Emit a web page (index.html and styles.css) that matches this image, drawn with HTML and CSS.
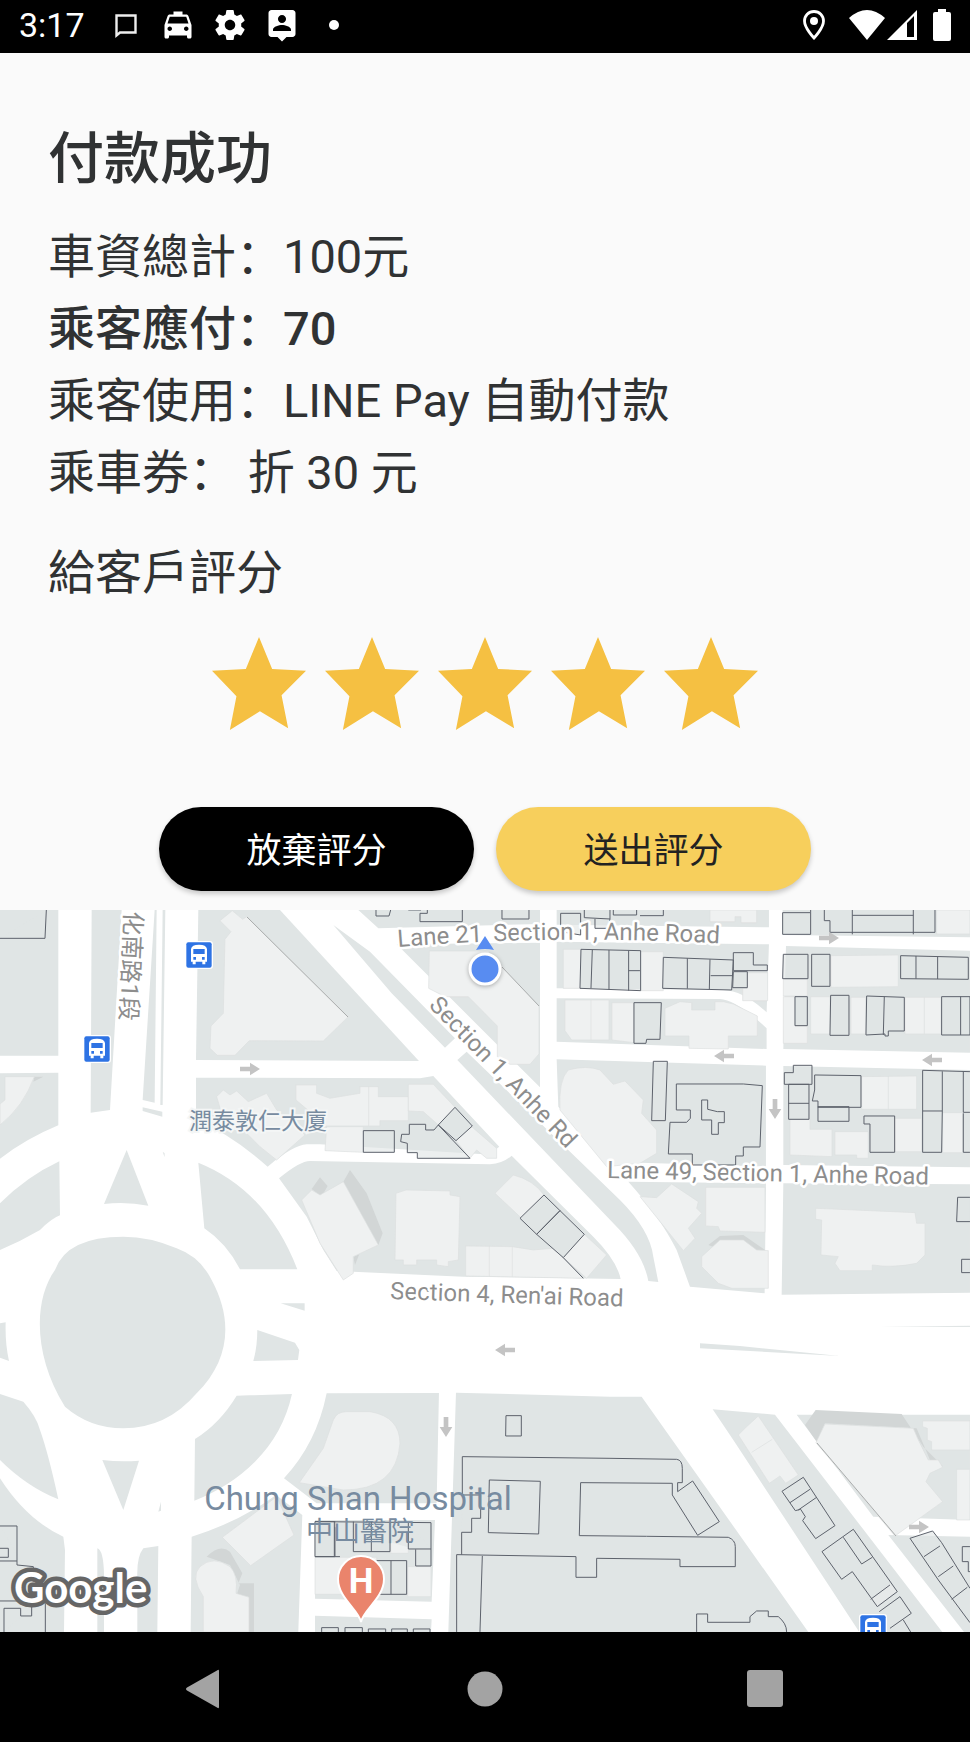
FILE: index.html
```html
<!DOCTYPE html>
<html lang="zh">
<head>
    <meta charset="UTF-8">
    <meta name="viewport" content="width=device-width, initial-scale=1.0">
    <title>付款成功</title>
    <link rel="stylesheet" href="styles.css">
</head>
<body>
    <header class="status-bar">
        <span class="clock">3:17</span>
        <div class="notifications">
            <svg viewBox="0 0 36 36"><path d="M8.500 8.500H27.500V25.500H12L8.500 28.500z" fill="none" stroke="#eee" stroke-width="2.400"/></svg>
            <svg viewBox="0 0 24 24"><path d="M18.920 6.010C18.720 5.420 18.160 5 17.500 5H15V3H9v2H6.500c-.66 0-1.210.42-1.420 1.010L3 12v8c0 .55.45 1 1 1h1c.55 0 1-.45 1-1v-1h12v1c0 .55.45 1 1 1h1c.55 0 1-.45 1-1v-8l-2.080-5.990zM6.500 16c-.83 0-1.500-.67-1.500-1.500S5.670 13 6.500 13s1.500.67 1.500 1.500S7.330 16 6.500 16zm11 0c-.83 0-1.500-.67-1.500-1.500s.67-1.500 1.500-1.500 1.500.67 1.500 1.500-.67 1.500-1.500 1.500zM5 11l1.500-4.500h11L19 11H5z"/></svg>
            <svg viewBox="0 0 24 24"><path d="M19.430 12.980c.04-.32.07-.64.07-.98s-.03-.66-.07-.98l2.110-1.650c.19-.15.24-.42.12-.64l-2-3.460c-.12-.22-.39-.3-.61-.22l-2.490 1c-.52-.4-1.080-.73-1.690-.98l-.38-2.650C14.460 2.180 14.250 2 14 2h-4c-.25 0-.46.18-.49.42l-.38 2.650c-.61.25-1.170.59-1.690.98l-2.490-1c-.23-.09-.49 0-.61.22l-2 3.460c-.13.22-.07.49.12.64l2.110 1.650c-.04.32-.07.65-.07.98s.03.66.07.98l-2.110 1.650c-.19.15-.24.42-.12.64l2 3.460c.12.22.39.3.61.22l2.490-1c.52.4 1.080.73 1.690.98l.38 2.650c.03.24.24.42.49.42h4c.25 0 .46-.18.49-.42l.38-2.650c.61-.25 1.170-.59 1.690-.98l2.490 1c.23.09.49 0 .61-.22l2-3.460c.12-.22.07-.49-.12-.64l-2.110-1.650zM12 15.500c-1.930 0-3.500-1.570-3.500-3.500s1.570-3.500 3.500-3.500 3.500 1.570 3.500 3.500-1.570 3.500-3.500 3.500z"/></svg>
            <svg viewBox="0 0 24 24"><path d="M19 2H5c-1.110 0-2 .9-2 2v14c0 1.100.89 2 2 2h4l3 3 3-3h4c1.100 0 2-.9 2-2V4c0-1.100-.9-2-2-2zm-7 3.300c1.490 0 2.700 1.210 2.700 2.700s-1.210 2.700-2.700 2.700S9.300 9.490 9.300 8s1.210-2.700 2.700-2.700zM18 16H6v-.9c0-2 4-3.100 6-3.100s6 1.100 6 3.100v.9z"/></svg>
            <svg viewBox="0 0 36 36"><circle cx="18" cy="18" r="5"/></svg>
        </div>
        <div class="system-icons">
            <svg class="pin" viewBox="0 0 22 30"><path d="M11 1.500C5.500 1.500 1.500 5.700 1.500 11C1.500 18 11 28 11 28S20.500 18 20.500 11C20.500 5.700 16.500 1.500 11 1.500z" fill="none" stroke="#fff" stroke-width="2.800"/><circle cx="11" cy="11" r="4"/></svg>
            <svg class="wifi" viewBox="0 0 36 30"><path d="M0 8Q18 -8 36 8L18 30z"/></svg>
            <svg class="signal" viewBox="0 0 30 30"><path d="M0 30L30 0V30zM20 13V27H27V6z" fill-rule="evenodd"/></svg>
            <svg class="battery" viewBox="0 0 18 32"><path d="M5 0H13V3H16Q18 3 18 5V30Q18 32 16 32H2Q0 32 0 30V5Q0 3 2 3H5z"/></svg>
        </div>
    </header>

    <main class="payment">
        <h1>付款成功</h1>
        <ul class="receipt">
            <li>車資總計：100元</li>
            <li class="due">乘客應付：70</li>
            <li>乘客使用：LINE Pay 自動付款</li>
            <li>乘車券： 折 30 元</li>
        </ul>
        <form class="rating">
            <h2 id="ratingLabel">給客戶評分</h2>
            <div class="stars" role="radiogroup" aria-labelledby="ratingLabel">
                <input type="radio" name="rating" value="1" aria-label="1">
                <input type="radio" name="rating" value="2" aria-label="2">
                <input type="radio" name="rating" value="3" aria-label="3">
                <input type="radio" name="rating" value="4" aria-label="4">
                <input type="radio" name="rating" value="5" aria-label="5" checked>
            </div>
            <div class="actions">
                <button type="button" class="skip">放棄評分</button>
                <button type="submit" class="send">送出評分</button>
            </div>
        </form>
    </main>

    <section class="map">
        <svg viewBox="0 0 970 722" preserveAspectRatio="xMidYMid slice">
            <defs>
                <path id="arrow" d="M-30 -7H0V-19L30 0L0 19V7H-30z"/>
                <g id="bus">
                    <rect x="-42" y="-42" width="84" height="84" rx="10" fill="#fff"/>
                    <rect x="-38" y="-38" width="76" height="76" rx="6" fill="#2e73e4"/>
                    <path d="M-24 20V-18Q-22 -31 0 -31Q22 -31 24 -18V20H19V28H10V20H-10V28H-19V20z" fill="#fff"/>
                    <path d="M-17 -18H17V-3H-17zM-17 6h8v8h-8zM9 6h8v8h-8z" fill="#2e73e4"/>
                </g>
                <path id="lane21" d="M398 37Q560 24 730 34"/>
                <path id="anheRd" d="M428 96L580 253"/>
                <path id="lane49" d="M607 268L950 275"/>
                <path id="renai" d="M390 389L640 397"/>
                <path id="dunhua" d="M125 1L119 130"/>
            </defs>

            <!-- city blocks -->
            <g class="block">
                <g transform="translate(0 -10) scale(.3333)">
                    <path d="M0 30H175V467H0zM275 30H365L330 630L272 638zM464 30H470L464 608L428 600zM488 30H496L488 615H481zM428 622L487 635V650L428 633z"/>
                    <path d="M595 30H840L1257 483L588 480z"/>
                    <path d="M0 520L175 518V676Q80 715 0 776zM588 533L1260 535L1300 528L1498 740Q1470 764 1440 762L960 733H920Q880 735 803 800Q690 700 588 660z"/>
                    <path d="M380 750L312 912Q380 905 445 917z"/>
                    <path d="M0 910Q80 830 178 784L180 946Q155 955 120 990Q60 1025 0 1050z"/>
                    <path d="M595 788Q800 870 892 1108H720Q680 1030 613 985z"/>
                    <path d="M488 755L494 760V772z"/>
                </g>
                <g transform="translate(320 -10) scale(.3333)">
                    <path d="M-123 835Q-60 783 -30 783L510 793Q550 790 575 767L820 1010Q890 1080 902 1137L430 1130L50 1113L10 1050L-40 950z"/>
                    <path d="M40 75L150 155L405 415L375 443L215 280zM412 480L440 455L900 900Q990 990 1000 1070L1015 1146L985 1143Q970 1060 880 970z"/>
                    <path d="M115 30H660V72L175 85zM230 133L660 128V562z"/>
                    <path d="M710 30H1347V82L710 74zM710 125L1347 133L1340 337Q1270 272 1210 270L710 265z"/>
                    <path d="M710 295L1200 297Q1250 300 1340 385V447L710 425zM710 478L1338 497V800L860 785L715 620z"/>
                    <path d="M925 845L1338 850L1334 1180L1110 1160L1070 1050Q1020 950 925 845z"/>
                </g>
                <g transform="translate(640 -10) scale(.3333)">
                    <path d="M428 30H990V112L428 105zM438 138L990 152V458L430 447zM430 498L990 510V802L430 795zM430 850L990 853V1178L425 1184z"/>
                </g>
                <g transform="translate(0 350) scale(.3333)">
                    <path d="M370 -70Q200 -70 165 30C100 120 100 290 195 440Q270 505 370 505Q500 505 590 400C690 300 700 180 635 60Q600 -10 530 -35Q450 -70 370 -70z"/>
                    <path d="M0 190L17 187Q15 250 27 303L0 293zM842 130H914V152zM772 210L885 248L898 270L894 300L760 303Q772 260 772 210z"/>
                    <path d="M710 407L876 402Q850 520 765 605Q690 680 583 722L585 537Q660 490 710 407z"/>
                    <path d="M0 402L70 425Q110 470 120 510Q145 580 175 718Q80 680 0 600zM307 600Q360 606 417 602L370 750zM475 755L483 725V752z"/>
                    <path d="M0 655Q80 780 190 830L195 870L192 1116H0zM292 865Q310 870 312 940V1116H292zM475 858L430 865Q410 890 412 950V1116H472z"/>
                    <path d="M575 830Q720 785 828 705L907 765L895 1116H572zM852 655Q950 550 980 400L1317 399L1310 730H950z"/>
                </g>
                <g transform="translate(320 350) scale(.3333)">
                    <path d="M-15 780H345L335 1025L-15 1016zM-15 1067L335 1078L333 1116H-15zM408 398L870 410H965L1465 1116H385z"/>
                </g>
                <g transform="translate(640 350) scale(.3333)">
                    <path d="M218 448L405 464L907 1116H658L280 540zM470 464H990V780L700 770zM745 825L990 830V1116H972zM180 250L300 258L600 288L180 265zM720 200L990 197V201z"/>
                </g>
            </g>

            <!-- shadows of tall buildings -->
            <g class="shadow">
                <path transform="translate(0 -10) scale(.3333)" d="M103 530H130L100 545zM960 832L983 858L965 890L935 867z"/>
                <path transform="translate(320 -10) scale(.3333)" d="M90 810L70 845L175 1035L188 1000L140 880zM100 1070L118 1062L105 1095z"/>
                <path transform="translate(640 -10) scale(.3333)" d="M205 1035L240 1008L310 1005L375 1050H340L310 1020H260L230 1045z"/>
                <path transform="translate(0 350) scale(.3333)" d="M620 890Q660 850 690 875L727 940L715 970H762V1116H745V1010L710 1005L720 975L690 915z"/>
                <path transform="translate(640 350) scale(.3333)" d="M527 450L785 462L850 560L910 620L870 600L830 505L555 490L530 545L495 495z"/>
            </g>

            <!-- flat buildings -->
            <g class="building">
                <g transform="translate(0 -10) scale(.3333)">
                    <path d="M697 32L660 62L693 95L675 118L670 340L633 378L630 445L652 466H705L748 422L970 423L1045 350L740 50L728 58z"/>
                    <path d="M15 530H103Q70 620 0 675V612L15 600zM670 570L650 590L665 640L740 700L780 740L830 780L915 705L830 630L800 580L745 605L710 573L690 585z"/>
                    <path d="M888 555H950V580L990 595L1080 580V560H1135V590H1225V662H1140V678H980L888 600z"/>
                </g>
                <g transform="translate(320 -10) scale(.3333)">
                    <path d="M20 680H130V757L15 752zM265 553H340L405 622L355 675L310 635L265 633zM455 680L530 745V775H500L470 750L450 775L408 722zM146 560V678"/>
                    <path d="M328 153H505L657 318V462L630 493H570L532 470V378L445 290H375L326 265z"/>
                    <path d="M745 510Q800 495 840 510L880 553L915 543L970 600L965 640L1010 690V760L960 790L860 800L720 630Q715 540 745 510z"/>
                    <path d="M70 845L175 1035L100 1070V1120L70 1140L0 1030L-55 900L-25 870L0 885z"/>
                    <path d="M228 880L258 870L390 873V885L420 890L415 1080L385 1085V1100L350 1095V1080H290V1095H250V1080H225z"/>
                    <path d="M437 1038L577 1040L640 1050L700 1045L790 1135L437 1128zM508 1038V1130M577 1040V1130M580 825Q640 840 672 885L605 955L525 880zM793 1003L860 1065L800 1135L730 1073z"/>
                    <path d="M730 148H783V265H730zM735 300H867V420H755L735 392zM813 300V420M876 308H942V428L876 420zM962 155H1030V272H962z"/>
                </g>
                <g transform="translate(640 -10) scale(.3333)">
                    <path d="M210 30H350V68H303V50H285V65H210zM890 30H990V102H890zM573 167L775 165V260L573 262z"/>
                    <path d="M75 325L120 305L155 308V330H225V305H250L280 312L352 348V408H265V447L147 445V408H75zM322 218H383V302H308V265H322z"/>
                    <path d="M430 238H502V288H430zM430 290H465V378H502V430H430zM512 290H570V402H512zM633 292H677V402H633zM795 292H903V402H795zM853 292V402"/>
                    <path d="M665 530L830 528V628H665zM745 528V628M450 658H510V688H576V770L450 765zM585 695H685V775H650V765H585zM765 655H845V755H765zM908 638H968V758H908z"/>
                    <path d="M0 890L50 893L95 852L175 905L170 925L185 940L145 985L165 1015L130 1052zM197 862H375V997L240 993L235 980L197 978z"/>
                    <path d="M185 1070L240 1020H310L350 1050L385 1052V1165H275L235 1150L185 1100zM527 925L825 938L830 970H855V1065L830 1090Q760 1105 697 1095V1112H600L585 1090L595 1070L543 1065L545 960L527 958z"/>
                </g>
                <g transform="translate(0 350) scale(.3333)">
                    <path d="M667 832L830 710L882 825L752 917zM610 1010Q570 950 600 920Q640 885 690 920Q715 945 708 1000L747 1012V1116H610z"/>
                    <path d="M898 668L970 565L1000 480Q1010 455 1040 455H1110Q1200 470 1200 550Q1190 690 1030 690z"/>
                </g>
                <g transform="translate(320 350) scale(.3333)">
                    <path d="M-15 892H170V1003H-15zM263 920H333V1010H263zM212 840H265V880H212z"/>
                </g>
                <g transform="translate(640 350) scale(.3333)">
                    <path d="M295 525L320 500L355 468L475 645L437 670L420 648L388 670zM335 577L397 538M555 492L820 505L835 540L850 570L865 600H895L908 622L870 640L858 665L908 725L765 828L528 548z"/>
                    <path d="M848 483H990V570H875V545L862 540V505L848 500zM950 628H990V780H950zM692 1018L750 968L772 995L712 1040z"/>
                </g>
            </g>

            <!-- outlined buildings -->
            <g class="outline">
                <path transform="translate(0 -10) scale(.3333)" d="M0 115H135L139 30"/>
                <g transform="translate(320 -10) scale(.3333)">
                    <path d="M168 30V48H207L212 30M265 30H303M322 30V40H300V65H427V30M546 30V57H627V30M722 40H782V105L722 95zM793 30V53L870 57V30M880 30V45H950V30M825 57V85H865L870 57"/>
                    <path d="M783 148L962 152V272L780 265zM817 150L813 265M867 150V270M926 152V272M926 212H960M942 308H1024L1020 418H980L978 430H942z"/>
                    <path d="M130 692H223V757H130zM245 703H268V673H317V690H342L355 675L450 775H292V758H262V730L242 725zM405 622L457 678L408 722L355 675z"/>
                    <path d="M672 885L720 932L650 1003L600 955zM720 932L793 1003L730 1073L650 1003zM730 1073L790 1135"/>
                </g>
                <g transform="translate(640 -10) scale(.3333)">
                    <path d="M0 47H70V30M428 38H512V103H428zM512 30V38M553 30V62H570V97H885V30M637 30V103M637 46H820M820 30V103"/>
                    <path d="M70 172L280 180L275 270L68 265zM142 175V266M210 178L208 268M212 227H278M280 158H340V195H382V212H280zM280 215H322V263H278z"/>
                    <path d="M430 163H504V236H428zM515 163H570V259H515zM782 167L985 172V238L782 236zM828 168V236M893 170V237M465 290H502V377H465zM572 286H627V406H570zM680 288L793 292V393H745V408H735V402L678 405zM733 290L730 405M905 290H990V405H905zM962 290V405"/>
                    <path d="M40 484H82L76 662H35zM109 552H310L367 557L360 741H310V768H287V795H157V762H85L90 667H140L151 655V630H109zM185 600H203V628L232 635H253V668H235V703H215V660H185z"/>
                    <path d="M433 518H460V496H516V553H433zM446 553H507V658H446zM446 610H507M524 525L663 527V622H534V603H517L524 570zM534 620H627V664H534zM672 648H764V757H690V672H672zM848 511L990 515M848 511V633H907V514M848 633V757H905L907 633M970 515V637H990M970 640V757H990"/>
                    <path d="M990 892H953L950 965H990M990 1078H965V1118H990"/>
                </g>
                <path transform="translate(0 350) scale(.3333)" d="M0 798H51V915L100 920V965M0 865H25V892H0M0 903H51M0 1023H90M12 1116V1045H62V1068H95V1040M136 1116V1030M945 785V890H1005V785z"/>
                <g transform="translate(320 350) scale(.3333)">
                    <path d="M558 467H604V528H557zM427 705V590L870 595L1070 598Q1087 600 1087 625V668H1073V695L1118 663L1198 785L1133 826L1057 705V670L782 668L778 827L980 829L1225 832Q1246 840 1246 860V920H1080V898L830 895V952H768V890L410 884V1116M425 884V817H455V775H482V705H427M508 660L661 664L656 822L505 818zM487 888L480 1116M1130 1116V1062H1163V1087H1290V1070L1310 1053H1345V1070H1375Q1400 1090 1400 1116"/>
                    <path d="M-15 785L333 788V918H287V868M43 785V888M100 785V875H210V788M154 785V875M265 788V867H333M-15 890H60M170 902H260V1003H170M213 902V1003M5 1116V1103H55V1116M75 1116V1103H127V1116M145 1116V1107H197V1116M215 1116V1107H262V1116M280 1116V1107H330V1116"/>
                </g>
                <g transform="translate(640 350) scale(.3333)">
                    <path d="M426 694L490 652L585 797L527 836L488 782L496 770L482 748L466 752zM450 728L510 688M475 750L530 712"/>
                    <path d="M546 875L640 808L772 995L712 1040L637 935L605 958zM610 832L665 912L697 892M692 1018L750 975M718 1055L780 1010L814 1060L750 1105M790 1080L812 1116"/>
                    <path d="M810 835L878 813L905 848L990 985M810 835L895 960L990 1088M852 890L900 858M895 950L940 918M935 1018L982 982M990 860H967V905H985V935H990"/>
                </g>
            </g>
            <g class="edge">
                <path d="M247 7L348 107M502 57L539 96M817 533L896 626"/>
            </g>

            <!-- one-way arrows -->
            <g class="arrows">
                <use href="#arrow" transform="translate(250 159) scale(.3333)"/>
                <use href="#arrow" transform="translate(829 28) scale(.3333)"/>
                <use href="#arrow" transform="translate(724 146) rotate(180) scale(.3333)"/>
                <use href="#arrow" transform="translate(932 150) rotate(180) scale(.3333)"/>
                <use href="#arrow" transform="translate(775 199) rotate(90) scale(.3333)"/>
                <use href="#arrow" transform="translate(505 440) rotate(180) scale(.3333)"/>
                <use href="#arrow" transform="translate(446 517) rotate(90) scale(.3333)"/>
                <use href="#arrow" transform="translate(919 617) scale(.3333)"/>
            </g>

            <use href="#bus" transform="translate(199 45) scale(.3333)"/>
            <use href="#bus" transform="translate(97 139) scale(.3333)"/>
            <use href="#bus" transform="translate(873 718) scale(.3333)"/>

            <g class="road-name">
                <text><textPath href="#lane21">Lane 21, Section 1, Anhe Road</textPath></text>
                <text><textPath href="#anheRd">Section 1, Anhe Rd</textPath></text>
                <text><textPath href="#lane49">Lane 49, Section 1, Anhe Road</textPath></text>
                <text><textPath href="#renai">Section 4, Ren'ai Road</textPath></text>
                <text><textPath href="#dunhua">化南路1段</textPath></text>
            </g>
            <g class="place-name">
                <text class="building-name" x="189" y="219">潤泰敦仁大廈</text>
                <text class="hospital" x="358" y="600">Chung Shan Hospital</text>
                <text class="hospital-local" x="360" y="631">中山醫院</text>
            </g>

            <!-- hospital marker -->
            <path d="M361 712C359 700 338 688 338 669A23 23 0 0 1 384 669C384 688 363 700 361 712z" fill="#ea846c" stroke="#fff" stroke-width="2"/>
            <text class="marker-letter" x="361" y="683">H</text>

            <!-- driver position -->
            <circle class="position" cx="485" cy="59" r="15"/>
            <path d="M485 26L476 40Q485 38 494 40z" fill="#588cf1"/>

            <text class="logo" x="14" y="693">Google</text>
        </svg>
    </section>

    <nav class="nav-bar">
        <button type="button" aria-label="Back"><svg viewBox="0 0 40 40"><path d="M34 2V38Q34 40 32 38.500L2 21.500Q0 20 2 18.500L32 1.500Q34 0 34 2z"/></svg></button>
        <button type="button" aria-label="Home"><svg viewBox="0 0 40 40"><circle cx="20" cy="20" r="17.500"/></svg></button>
        <button type="button" aria-label="Recent apps"><svg viewBox="0 0 40 40"><rect x="2" y="1" width="36" height="37" rx="3"/></svg></button>
    </nav>
</body>
</html>
```
FILE: styles.css
```css
:root {
    --page-bg: #fafafa;
    --text-color: #303233;
    --star-color: #f5c042;
    --send-color: #f7cf5c;
    --block-color: #e0e5e5;
    --building-color: #eff1f1;
    --cjk: Roboto, "Noto Sans CJK SC", sans-serif;
}

* {
    box-sizing: border-box;
}

body {
    margin: 0;
    min-height: 100vh;
    display: flex;
    flex-direction: column;
    font-family: var(--cjk);
    color: var(--text-color);
    background-color: var(--page-bg);
}

svg {
    display: block;
}

/* Status bar */
.status-bar {
    display: flex;
    align-items: center;
    height: 53px;
    padding: 0 19px 3px;
    background-color: #000;
    color: #fff;
    fill: #fff;
}

.clock {
    width: 89px;
    font-size: 34px;
    line-height: 50px;
}

.notifications {
    display: flex;
    gap: 16px;
}

.notifications svg {
    width: 36px;
    height: 36px;
}

.system-icons {
    display: flex;
    align-items: center;
    margin-left: auto;
}

.pin {
    width: 22px;
    height: 30px;
    margin-right: 24px;
}

.wifi {
    width: 36px;
    height: 30px;
    margin-right: 2px;
}

.signal {
    width: 30px;
    height: 30px;
    margin-right: 16px;
}

.battery {
    width: 18px;
    height: 32px;
}

/* Payment summary */
.payment {
    padding: 66px 48px 19px;
}

h1 {
    margin: 0;
    font-size: 56px;
    line-height: 80px;
    font-weight: 500;
}

.receipt {
    margin: 22px 0 28px;
    padding: 0;
    list-style: none;
    font-size: 47px;
    line-height: 72px;
}

.due {
    font-weight: 500;
}

h2 {
    margin: 0;
    font-size: 47px;
    line-height: 72px;
    font-weight: 400;
}

.stars {
    display: flex;
    justify-content: center;
    gap: 19px;
    margin: 28px 0 76px;
}

.stars input {
    appearance: none;
    width: 94px;
    height: 94px;
    margin: 0;
    background-color: var(--star-color);
    clip-path: polygon(50% 0, 64% 34%, 100% 36%, 74% 62%, 81% 97%, 51% 79%, 19% 99%, 26% 63%, 0 36%, 36% 34%);
    cursor: pointer;
}

.actions {
    display: flex;
    justify-content: center;
    gap: 22px;
}

.actions button {
    width: 315px;
    height: 84px;
    padding: 0 0 3px;
    border: none;
    border-radius: 42px;
    font-family: var(--cjk);
    font-size: 35px;
    box-shadow: 0 3px 5px rgba(0, 0, 0, 0.2);
    cursor: pointer;
}

.actions .skip {
    background-color: #000;
    color: #fff;
}

.actions .send {
    background-color: var(--send-color);
    color: #222;
}

/* Map */
.map {
    flex: 1;
    display: flex;
    background-color: #fff;
    overflow: hidden;
}

.map svg {
    width: 100%;
}

.block {
    fill: var(--block-color);
}

.shadow {
    fill: #d2d6d6;
}

.building {
    fill: var(--building-color);
    stroke: #dcdfdf;
    stroke-width: 2;
}

.outline {
    fill: var(--block-color);
    fill-opacity: 0.6;
    stroke: #5c616b;
    stroke-width: 3;
}

.edge {
    fill: none;
    stroke: #a9acac;
    stroke-width: 1;
}

.arrows {
    fill: #c4c4c4;
}

.road-name {
    font-size: 24px;
    fill: #8d8d8d;
    stroke: #fff;
    stroke-width: 5px;
    stroke-linejoin: round;
    paint-order: stroke;
}

.place-name {
    fill: #778ba0;
}

.building-name {
    font-size: 23px;
    stroke: #f4f6f6;
    stroke-width: 4px;
    paint-order: stroke;
}

.hospital {
    font-size: 33px;
    text-anchor: middle;
}

.hospital-local {
    font-size: 27px;
    text-anchor: middle;
}

.marker-letter {
    font-size: 35px;
    font-weight: 700;
    text-anchor: middle;
    fill: #fff;
}

.position {
    fill: #588cf1;
    stroke: #fff;
    stroke-width: 3px;
    filter: drop-shadow(0 1px 2px rgba(0, 0, 0, 0.3));
}

.logo {
    font-family: Lato, sans-serif;
    font-size: 42px;
    font-weight: 700;
    fill: #fff;
    stroke: #666;
    stroke-width: 9px;
    stroke-linejoin: round;
    paint-order: stroke;
}

/* Android navigation */
.nav-bar {
    display: grid;
    grid-template-columns: repeat(3, 280px);
    justify-content: center;
    height: 110px;
    padding-top: 3px;
    background-color: #000;
}

.nav-bar button {
    display: flex;
    align-items: center;
    justify-content: center;
    padding: 0;
    border: none;
    background: none;
    cursor: pointer;
}

.nav-bar svg {
    width: 40px;
    height: 40px;
    fill: #a3a3a3;
}
```
